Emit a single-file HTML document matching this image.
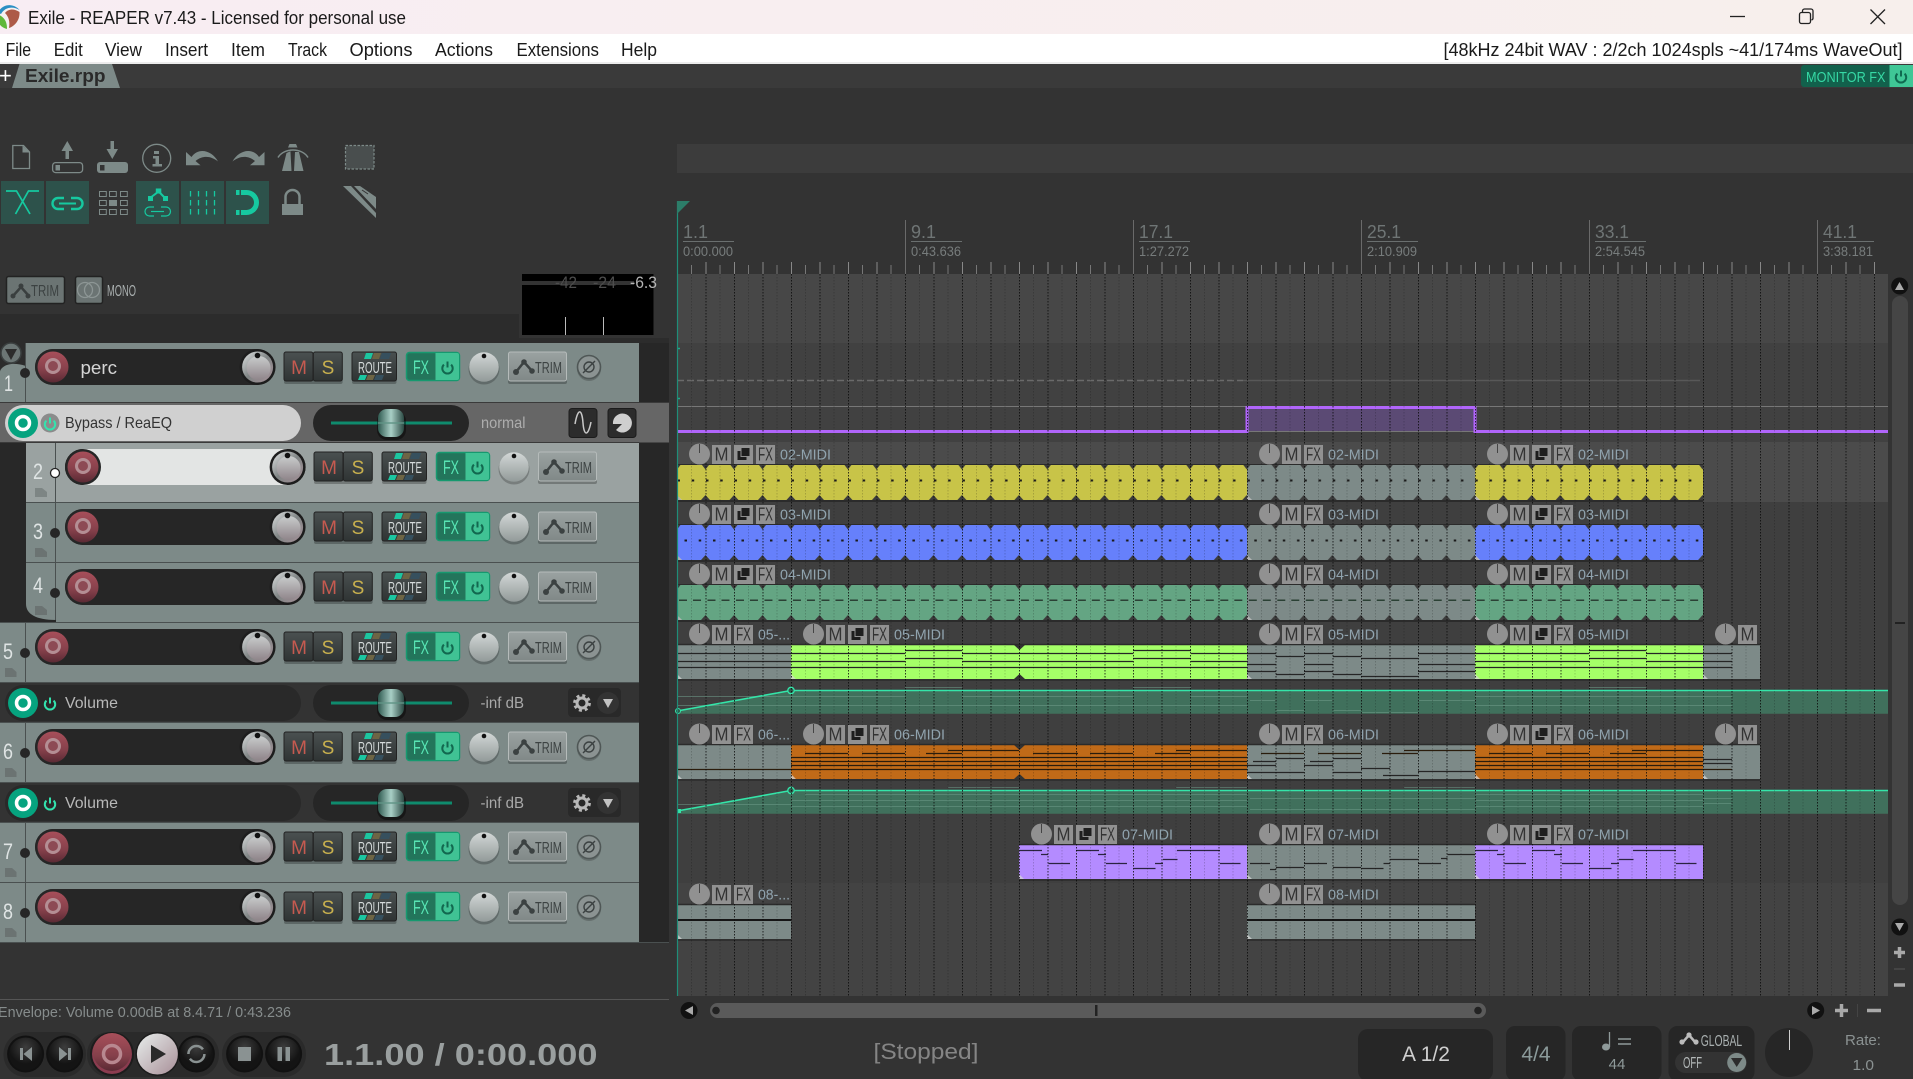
<!DOCTYPE html>
<html lang="en"><head><meta charset="utf-8"><title>Exile - REAPER v7.43</title>
<style>
html,body{margin:0;padding:0;background:#333;width:1913px;height:1079px;overflow:hidden}
svg{display:block;font-family:"Liberation Sans",sans-serif}
text{white-space:pre}
.c{text-anchor:middle}
.t18{font-size:18px;fill:#1a1a1a}
.tm{font-size:19px;fill:#c65a50;text-anchor:middle}
.ts{font-size:19px;fill:#c8b04e;text-anchor:middle}
.tr{font-size:16px;fill:#d5dada}
.fx{font-size:19px;fill:#58e6b5}
.tt{font-size:16px;fill:#3c4242}
.num{font-size:22px;fill:#dfe4e4}
.env{font-size:16px}
.b{font-size:18px;fill:#333;text-anchor:middle}
.n{font-size:15px;fill:#90a3ae}
.rl{font-size:18px;fill:#6f7575}
.rs{font-size:14px;fill:#777c7c}
</style></head><body>
<svg xmlns="http://www.w3.org/2000/svg" width="1913" height="1079" viewBox="0 0 1913 1079">
<defs>
<linearGradient id="tb" x1="0" x2="1"><stop offset="0" stop-color="#f8edf3"/><stop offset="1" stop-color="#f7efec"/></linearGradient>
<linearGradient id="kn" x1="0" y1="0" x2="1" y2="1"><stop offset="0" stop-color="#e2e5e5"/><stop offset=".5" stop-color="#7f8484"/><stop offset="1" stop-color="#a8929a"/></linearGradient>
<linearGradient id="kc" x1="0" y1="0" x2="0" y2="1"><stop offset="0" stop-color="#c9cccc"/><stop offset="1" stop-color="#8f858a"/></linearGradient>
<linearGradient id="pk" x1="0" y1="0" x2="0" y2="1"><stop offset="0" stop-color="#d3d8d7"/><stop offset="1" stop-color="#929a99"/></linearGradient>
<linearGradient id="rc" x1="0" y1="0" x2="0" y2="1"><stop offset="0" stop-color="#a84f5a"/><stop offset=".6" stop-color="#85404b"/><stop offset="1" stop-color="#5a2a34"/></linearGradient>
<linearGradient id="bt" x1="0" y1="0" x2="0" y2="1"><stop offset="0" stop-color="#4a5151"/><stop offset="1" stop-color="#2f3434"/></linearGradient>
<linearGradient id="tr" x1="0" y1="0" x2="0" y2="1"><stop offset="0" stop-color="#9aa2a1"/><stop offset="1" stop-color="#808887"/></linearGradient>
<linearGradient id="th" x1="0" x2="1"><stop offset="0" stop-color="#2f5a50"/><stop offset=".5" stop-color="#a9cfc6"/><stop offset="1" stop-color="#2c4a44"/></linearGradient>
<radialGradient id="tp" cy=".3"><stop offset="0" stop-color="#3d3d3d"/><stop offset="1" stop-color="#141414"/></radialGradient>
<linearGradient id="pl" x1="0" y1="0" x2="1" y2="1"><stop offset="0" stop-color="#e8eeec"/><stop offset="1" stop-color="#a88f98"/></linearGradient>

<path id="pw" d="M-3.600-3.400A5.200 5.200 0 1 0 3.600-3.400M0-6.500V-.5" fill="none" stroke-width="2"/>

<g id="rec1">
 <circle cx="53" cy="0" r="18" fill="#262626"/>
 <circle cx="53" cy="0" r="15.500" fill="url(#rc)"/>
 <circle cx="53" cy="-1" r="6.500" fill="#8d4a54" stroke="#b48e94" stroke-width="3"/>
</g>
<g id="kn1">
 <circle cx="257.600" cy="0" r="18" fill="#1d1d1d"/>
 <circle cx="257.600" cy="0" r="15.500" fill="url(#kn)"/>
 <circle cx="258.600" cy="1" r="12" fill="url(#kc)"/>
 <circle cx="257.500" cy="-11.500" r="2.800" fill="#111"/>
</g>
<g id="tcp">
 <rect x="35" y="-18" width="240" height="36" rx="18" fill="#262626"/>
 <use href="#rec1"/>
 <use href="#kn1"/>
 <rect x="284" y="-13" width="58.600" height="30" rx="2" fill="#000" opacity=".25"/>
 <rect x="284" y="-15" width="29" height="29" rx="2" fill="url(#bt)" stroke="#222"/>
 <rect x="313.300" y="-15" width="29" height="29" rx="2" fill="url(#bt)" stroke="#222"/>
 <rect x="352" y="-13" width="44.500" height="30" rx="2" fill="#000" opacity=".25"/>
 <rect x="352" y="-15" width="44.500" height="29" rx="2" fill="url(#bt)" stroke="#222"/>
 <path d="M366-14H373L371-8H364Z" fill="#1cc6a0"/><path d="M374-14H381L379-8H372Z" fill="#6d6545"/><path d="M382-14H391L389-8H380Z" fill="#36505e"/>
 <path d="M360 8H367L365 13H358Z" fill="#1cc6a0"/><path d="M368 8H375L373 13H366Z" fill="#6d6545"/><path d="M376 8H384L382 13H374Z" fill="#36505e"/>
 <rect x="406.500" y="-14.500" width="53" height="28" rx="3" fill="#23755b" stroke="#16996f" stroke-width="1.500"/>
 <path d="M435.500-14H457a2 2 0 0 1 2 2V11a2 2 0 0 1-2 2H435.500Z" fill="#40c294"/>
 <use href="#pw" x="447.500" y="1" stroke="#12684f"/>
 <circle cx="484" cy="2" r="15.500" fill="#000" opacity=".22"/>
 <circle cx="484" cy="0" r="14.800" fill="url(#pk)"/>
 <circle cx="484" cy="-11" r="2.300" fill="#111"/>
 <rect x="508" y="-13" width="59" height="30" rx="2" fill="#000" opacity=".25"/>
 <rect x="508.500" y="-15" width="58" height="29" rx="2" fill="url(#tr)" stroke="#b5bbba"/>
 <path d="M516 5L524-5L532 4" fill="none" stroke="#3c4242" stroke-width="2.500"/>
 <circle cx="516" cy="5" r="3" fill="#3c4242"/><circle cx="524" cy="-5" r="2.800" fill="#3c4242"/><circle cx="532" cy="4" r="2.800" fill="#3c4242"/>
</g>
<g id="ph">
 <circle cx="589" cy="2" r="12" fill="#000" opacity=".2"/>
 <circle cx="589" cy="0" r="11.500" fill="#8b9392" stroke="#4f5756" stroke-width="1.600"/>
 <circle cx="589" cy="0" r="5" fill="none" stroke="#3c4242" stroke-width="1.400"/>
 <path d="M583 6L595-6" stroke="#3c4242" stroke-width="1.400"/>
</g>
<g id="fad">
 <rect x="313" y="-18" width="156" height="36" rx="18" fill="#262626"/>
 <rect x="331" y="-1.500" width="121" height="3" fill="#0f8b6d"/>
 <rect x="377" y="-12" width="29" height="29" rx="10" fill="#000" opacity=".4"/>
 <rect x="378" y="-14" width="26" height="28" rx="9" fill="url(#th)"/>
 <rect x="378" y="-1" width="26" height="2" fill="#5f9486" opacity=".7"/>
</g>
<g id="eb">
 <circle cx="23" cy="0" r="15" fill="#06a37f"/>
 <circle cx="23" cy="0" r="6.500" fill="none" stroke="#fff" stroke-width="3.500"/>
</g>
<g id="rb">
 <circle cx="0" cy="0" r="18.500" fill="#111"/>
 <circle cx="0" cy="0" r="16.500" fill="url(#tp)"/>
</g>
<g id="bxk"><circle cx="22.500" cy="0" r="10.500" fill="#919191"/><path d="M22.500-10V-1" stroke="#444" stroke-width="1"/><rect x="35" y="-9" width="19" height="19" fill="#919191"/></g>
<g id="dup"><rect x="0" y="-9" width="19" height="19" fill="#919191"/><rect x="3.500" y="-3" width="9" height="9" fill="#1e1e1e"/><rect x="7" y="-6.500" width="9" height="9" fill="#1e1e1e" stroke="#919191" stroke-width="1"/></g>
<g id="l3"><use href="#bxk"/><use href="#dup" x="57"/><rect x="79" y="-9" width="19" height="19" fill="#919191"/></g>
<g id="l2"><use href="#bxk"/><rect x="57" y="-9" width="19" height="19" fill="#919191"/></g>

<pattern id="n1" x="677" y="465" width="28.490" height="60" patternUnits="userSpaceOnUse">
 <path d="M-3.500 0H3.500L0 4.500ZM25 0H32L28.490 4.500ZM-4.500 35H4.500L0 30ZM24 35H33L28.490 30Z" fill="#3c3c3c"/>
 <rect x="0.500" y="14.500" width="2.500" height="2" fill="#1a1a1a"/><rect x="14.700" y="14.500" width="2.500" height="2" fill="#1a1a1a"/>
</pattern>
<pattern id="n3" x="677" y="465" width="28.490" height="60" patternUnits="userSpaceOnUse">
 <path d="M-3.500 0H3.500L0 4.500ZM25 0H32L28.490 4.500ZM-4.500 35H4.500L0 30ZM24 35H33L28.490 30Z" fill="#3c3c3c"/>
 <rect x="7.500" y="14.500" width="2.500" height="2" fill="#1a1a1a"/><rect x="21.700" y="14.500" width="2.500" height="2" fill="#1a1a1a"/>
</pattern>
<pattern id="n2" x="677" y="585" width="28.490" height="60" patternUnits="userSpaceOnUse">
 <path d="M-3.500 0H3.500L0 4.500ZM25 0H32L28.490 4.500ZM-4.500 35H4.500L0 30ZM24 35H33L28.490 30Z" fill="#3c3c3c"/>
 <rect x="2" y="14.500" width="8" height="1.500" fill="#2a4034"/><rect x="16" y="14.500" width="8" height="1.500" fill="#2a4034"/>
</pattern>
<path id="g28" d="M706 274V996M734.500 274V996M763 274V996M791.500 274V996M820 274V996M848.500 274V996M877 274V996M905.500 274V996M934 274V996M962.500 274V996M991 274V996M1019.500 274V996M1048 274V996M1076.500 274V996M1105 274V996M1133.500 274V996M1162 274V996M1190.500 274V996M1219 274V996M1247.500 274V996M1276 274V996M1304.500 274V996M1333 274V996M1361.500 274V996M1390 274V996M1418.500 274V996M1447 274V996M1475.500 274V996M1504 274V996M1532.500 274V996M1561 274V996M1589.500 274V996M1618 274V996M1646.500 274V996M1675 274V996M1703.500 274V996M1732 274V996M1760.500 274V996M1789 274V996M1817.500 274V996M1846 274V996M1874.500 274V996"/>
<path id="g14" d="M691.500 274V996M720 274V996M748.500 274V996M777 274V996M805.500 274V996M834 274V996M862.500 274V996M891 274V996M919.500 274V996M948 274V996M976.500 274V996M1005 274V996M1033.500 274V996M1062 274V996M1090.500 274V996M1119 274V996M1147.500 274V996M1176 274V996M1204.500 274V996M1233 274V996M1261.500 274V996M1290 274V996M1318.500 274V996M1347 274V996M1375.500 274V996M1404 274V996M1432.500 274V996M1461 274V996M1489.500 274V996M1518 274V996M1546.500 274V996M1575 274V996M1603.500 274V996M1632 274V996M1660.500 274V996M1689 274V996M1717.500 274V996M1746 274V996M1774.500 274V996M1803 274V996M1831.500 274V996M1860 274V996"/>
<clipPath id="cr"><rect x="677" y="262" width="1236" height="12"/></clipPath>
<clipPath id="cs"><rect x="677" y="265" width="1236" height="9"/></clipPath>
</defs>

<!-- base -->
<rect width="1913" height="1079" fill="#333"/>
<rect width="1913" height="34" fill="url(#tb)"/>
<rect y="34" width="1913" height="28" fill="#fff"/>
<rect y="62" width="1913" height="2" fill="#ececec"/>
<rect y="64" width="1913" height="24" fill="#3a3a3a"/>

<!-- title -->
<circle cx="8" cy="16.500" r="11.500" fill="#f4f0f0"/>
<path d="M-2 13C2 3 14 3 19.500 10C13 6 5 7 1 14Z" fill="#2a8fc4"/>
<path d="M5 13C9 8 15 9 19.500 12C20 20 15 26 9 28C10 22 9 17 5 13Z" fill="#ad5a48"/>
<path d="M-3 14C-4 22 1 28 7 29C7 22 5 17 -3 14Z" fill="#5fb83a"/>
<text x="28" y="24" class="t18" textLength="378" lengthAdjust="spacingAndGlyphs">Exile - REAPER v7.43 - Licensed for personal use</text>
<path d="M1730 16.500H1745" stroke="#222" stroke-width="1.300"/>
<rect x="1799.500" y="12.500" width="11" height="11" rx="2" fill="none" stroke="#222" stroke-width="1.300"/>
<path d="M1802.500 12V11a2 2 0 0 1 2-2H1811a2 2 0 0 1 2 2V18a2 2 0 0 1-1.500 2" fill="none" stroke="#222" stroke-width="1.300"/>
<path d="M1870.500 9.500L1885 24M1885 9.500L1870.500 24" stroke="#222" stroke-width="1.300"/>

<!-- menu -->
<g class="t18">
<text x="5.600" y="56" class="t18" textLength="25.500" lengthAdjust="spacingAndGlyphs">File</text>
<text x="53.800" y="56" class="t18" textLength="29" lengthAdjust="spacingAndGlyphs">Edit</text>
<text x="105" y="56" class="t18" textLength="37" lengthAdjust="spacingAndGlyphs">View</text>
<text x="165" y="56" class="t18" textLength="43" lengthAdjust="spacingAndGlyphs">Insert</text>
<text x="231" y="56" class="t18" textLength="34" lengthAdjust="spacingAndGlyphs">Item</text>
<text x="288" y="56" class="t18" textLength="39" lengthAdjust="spacingAndGlyphs">Track</text>
<text x="349.500" y="56" class="t18" textLength="63" lengthAdjust="spacingAndGlyphs">Options</text>
<text x="435" y="56" class="t18" textLength="58" lengthAdjust="spacingAndGlyphs">Actions</text>
<text x="516.500" y="56" class="t18" textLength="82.500" lengthAdjust="spacingAndGlyphs">Extensions</text>
<text x="621" y="56" class="t18" textLength="36" lengthAdjust="spacingAndGlyphs">Help</text>
<text x="1443.500" y="56" class="t18" textLength="459" lengthAdjust="spacingAndGlyphs">[48kHz 24bit WAV : 2/2ch 1024spls ~41/174ms WaveOut]</text>
</g>

<!-- tab -->
<text x="-1" y="83" font-size="22" fill="#fff">+</text>
<path d="M12 88L19.500 64H112L120 88Z" fill="#7d8a88"/>
<text x="25" y="82" font-size="18" font-weight="bold" fill="#2a2a2a" textLength="80.500" lengthAdjust="spacingAndGlyphs">Exile.rpp</text>
<rect x="1801" y="65" width="112" height="22" rx="3" fill="#12614c"/>
<path d="M1889.500 65H1913V87H1889.500Z" fill="#3fc796"/>
<text x="1806" y="82" font-size="15" fill="#36d9a5" textLength="79.500" lengthAdjust="spacingAndGlyphs">MONITOR FX</text>
<use href="#pw" x="1901" y="77" stroke="#0f6a50"/>
<rect x="677" y="144" width="1236" height="29" fill="#3c3c3c"/>

<!-- toolbar -->
<g fill="#7d8a88">
<path d="M12.800 145.500H23.500L29.500 152V168.500H12.800Z" fill="none" stroke="#7d8a88" stroke-width="1.300"/>
<path d="M22.500 145.500L29.500 152.500H22.500Z"/>
<path d="M67.300 141L73 151H69V159H65.500V151H61.500Z"/>
<rect x="52.600" y="162.600" width="30" height="10" rx="3" fill="none" stroke="#7d8a88" stroke-width="1.300"/><rect x="55.500" y="165" width="4.500" height="5.500"/>
<path d="M112.300 159L118 149H114V141H110.500V149H106.500Z"/>
<rect x="97" y="162" width="31" height="11" rx="3"/><rect x="100" y="165" width="4.500" height="5.500" fill="#333"/>
<circle cx="156.700" cy="158.300" r="14" fill="none" stroke="#7d8a88" stroke-width="1.300"/>
<path d="M154 151h5v3h-5zM153 156h6v8h3v2.500h-9.500V164h3v-5.500h-2.500z"/>
<path d="M186 152V165.200H200.500L195.500 161C203 155 211 156 218 161.500C212 150 198 147 191.500 157Z"/>
<path d="M264.500 152V165.200H250L255 161C247.500 155 239.500 156 232.500 161.500C238.500 150 252.500 147 259 157Z"/>
<path d="M289.500 144H296L297.500 147.500H288Z"/>
<path d="M286.500 153L290.500 151.300V152.200L291.500 171H282ZM299 152L303.500 171H294L295 152Z"/>
<path d="M278 157.500C284 147.500 302 147.500 308 157.500" fill="none" stroke="#7d8a88" stroke-width="1.500"/>
<rect x="345.500" y="145.500" width="28.500" height="23.500" fill="#494e4e" stroke="#7d8a88" stroke-dasharray="2.500 1.500" stroke-width="1.200"/>
<rect x="99.500" y="191.500" width="6.800" height="5" fill="none" stroke="#7d8a88"/><rect x="109.500" y="191.500" width="6.800" height="5" fill="none" stroke="#7d8a88"/><rect x="120.500" y="191.500" width="6.800" height="5" fill="none" stroke="#7d8a88"/>
<rect x="99.500" y="200.500" width="6.800" height="5" fill="none" stroke="#7d8a88"/><rect x="109" y="200" width="8" height="6"/><rect x="120.500" y="200.500" width="6.800" height="5" fill="none" stroke="#7d8a88"/>
<rect x="99.500" y="209.500" width="6.800" height="5" fill="none" stroke="#7d8a88"/><rect x="109.500" y="209.500" width="6.800" height="5" fill="none" stroke="#7d8a88"/><rect x="120.500" y="209.500" width="6.800" height="5" fill="none" stroke="#7d8a88"/>
<rect x="282" y="204" width="21" height="11"/>
<path d="M285.500 204.500V197a7 7 0 0 1 14 0V204.500" fill="none" stroke="#7d8a88" stroke-width="2.500"/>
<path d="M343 186H351L376 213V218ZM354 186H360L376 197V209Z"/>
<path d="M362 190L368 194M365 186L372 191" stroke="#333" stroke-width="1"/>
</g>
<g fill="#2d524b">
<rect x="1" y="181" width="43" height="43"/><rect x="46" y="181" width="43" height="43"/><rect x="136" y="181" width="43" height="43"/><rect x="181" y="181" width="43" height="43"/><rect x="226" y="181" width="43" height="43"/>
</g>
<g fill="none" stroke="#16c9a0" stroke-width="1.700">
<path d="M6 191H16.500L30 214M39 191H28.500L15.500 214"/>
<path d="M64 198H58A5.500 5.500 0 0 0 58 209H64M71 198H77A5.500 5.500 0 0 1 77 209H71" stroke-width="2.400"/>
<path d="M59 203.500H76" stroke-width="2"/>
<path d="M154 207H149.500A4.500 4.500 0 0 0 149.500 216H154M161 207H166A4.500 4.500 0 0 1 166 216H161" stroke-width="1.200"/>
<path d="M151 211.500H164" stroke-width="1.200"/>
<path d="M150 198L158.700 191.500L165 198" stroke-width="2"/>
<path d="M190.500 191V215M198.500 191V215M206.500 191V215M214.500 191V215" stroke-width="1.300" stroke-dasharray="5.500 3.500"/>
<path d="M241 192.500H246.500A10 10 0 0 1 246.500 212.500H241" stroke-width="5"/>
</g>
<g fill="#16c9a0">
<rect x="155.800" y="188.500" width="5.500" height="5"/><rect x="148" y="196" width="5" height="5"/><rect x="163" y="196" width="5" height="5"/>
<rect x="236" y="190" width="3.500" height="5"/><rect x="236" y="210" width="3.500" height="5"/>
</g>

<!-- master row -->
<rect x="0" y="314" width="519" height="24" fill="#2c2c2c"/>
<rect x="0" y="338" width="669" height="5" fill="#2c2c2c"/>
<rect x="6.500" y="276.500" width="58" height="27" rx="2" fill="#6b7473" stroke="#222" stroke-width="1.500"/>
<path d="M13 296L21 287L28 295" fill="none" stroke="#3a3f3f" stroke-width="2.500"/><circle cx="13" cy="296" r="2.500" fill="#3a3f3f"/><circle cx="21" cy="286" r="2.500" fill="#3a3f3f"/><circle cx="28" cy="296" r="2.500" fill="#3a3f3f"/>
<text x="31" y="296" font-size="16" fill="#3c4242" textLength="28" lengthAdjust="spacingAndGlyphs">TRIM</text>
<rect x="75.500" y="276.500" width="27" height="27" rx="2" fill="#6b7473" stroke="#222" stroke-width="1.500"/>
<circle cx="85" cy="290" r="7.500" fill="none" stroke="#8d9695" stroke-width="1.300"/><circle cx="92" cy="290" r="7.500" fill="none" stroke="#8d9695" stroke-width="1.300"/>
<text x="107" y="296" font-size="16" fill="#aab0b0" textLength="29" lengthAdjust="spacingAndGlyphs">MONO</text>
<rect x="522" y="274" width="131.500" height="61" fill="#000"/>
<rect x="522" y="281" width="112" height="4" fill="#333"/>
<path d="M565.500 317V335M603.500 317V335" stroke="#bbb" stroke-width="1"/>
<text x="555" y="288" font-size="17" fill="#4d4d4d" textLength="22" lengthAdjust="spacingAndGlyphs">-42</text>
<text x="593" y="288" font-size="17" fill="#4d4d4d" textLength="23" lengthAdjust="spacingAndGlyphs">-24</text>
<text x="630" y="288" font-size="17" fill="#b5b5b5" textLength="27" lengthAdjust="spacingAndGlyphs">-6.3</text>

<!-- track panels -->
<rect x="639" y="343" width="30" height="599" fill="#272727"/>
<rect x="0" y="442" width="26" height="180" fill="#282828"/>
<rect x="0" y="343" width="639" height="59" fill="#7d8a88"/>
<rect x="26" y="442" width="613" height="60" fill="#9aa2a1"/>
<rect x="26" y="502" width="613" height="60" fill="#7d8a88"/>
<rect x="26" y="562" width="613" height="60" fill="#7d8a88"/>
<rect x="0" y="622" width="639" height="60" fill="#7d8a88"/>
<rect x="0" y="722" width="639" height="60" fill="#7d8a88"/>
<rect x="0" y="822" width="639" height="60" fill="#7d8a88"/>
<rect x="0" y="882" width="639" height="60" fill="#7d8a88"/>
<path d="M0 343H26V366C8 360 0 368 0 372Z" fill="#2c2c2c"/>
<rect x="0" y="402" width="669" height="40.500" fill="#666"/>
<path d="M0 402.500H669M0 442.500H639" stroke="#3a3a3a" stroke-width="1"/>
<rect x="0" y="682" width="639" height="40" fill="#333"/>
<rect x="0" y="782" width="639" height="40" fill="#333"/>
<path d="M26 502.500H639M26 562.500H639M0 622.500H639M0 682.500H639M0 722.500H639M0 782.500H639M0 822.500H639M0 882.500H639M0 942.500H669" stroke="#4a5050" stroke-width="1"/>
<path d="M25.500 343V402M55.500 443V622M25.500 622V682M25.500 722V782M25.500 822V942" stroke="#4a5050" stroke-width="1"/>
<circle cx="11" cy="353" r="10" fill="#6c7675" stroke="#3a3f3f" stroke-width="1.500"/><path d="M5 349H17L11 360Z" fill="#2c2c2c"/>

<!-- Track 1 -->
<g transform="translate(0,367)"><use href="#tcp"/><use href="#ph"/>
<text x="80.500" y="7" font-size="18" fill="#d5d5d5" textLength="36.500" lengthAdjust="spacingAndGlyphs">perc</text>
<text x="299" y="7" class="tm">M</text><text x="328" y="7" class="ts">S</text>
<text x="358" y="6" class="tr" textLength="34" lengthAdjust="spacingAndGlyphs">ROUTE</text>
<text x="413" y="7" class="fx" textLength="16" lengthAdjust="spacingAndGlyphs">FX</text>
<text x="535" y="6" class="tt" textLength="27" lengthAdjust="spacingAndGlyphs">TRIM</text></g>
<text x="4" y="391" class="num" textLength="9" lengthAdjust="spacingAndGlyphs">1</text>
<circle cx="25" cy="373" r="5" fill="#262626"/>

<!-- Bypass lane -->
<g transform="translate(0,423)">
<rect x="5" y="-18" width="296" height="36" rx="18" fill="#d0d0d0"/>
<use href="#eb"/>
<circle cx="50" cy="0" r="9.500" fill="#8b8b8b"/><use href="#pw" x="50" y="1" stroke="#33e3ae"/>
<text x="65" y="5" class="env" fill="#333" textLength="107" lengthAdjust="spacingAndGlyphs">Bypass / ReaEQ</text>
<use href="#fad"/>
<text x="481" y="5" class="env" fill="#adadad" textLength="44.500" lengthAdjust="spacingAndGlyphs">normal</text>
<rect x="569" y="-14.500" width="28" height="29" rx="3" fill="#2c2c2c" stroke="#1c1c1c"/>
<path d="M575 1C578-16 582-14 583 0C584 13 588 14 591 -1" fill="none" stroke="#c8c8c8" stroke-width="1.500"/>
<rect x="608" y="-14.500" width="28" height="29" rx="3" fill="#2c2c2c" stroke="#1c1c1c"/>
<path d="M622-9.500A9.500 9.500 0 1 1 616 7L622 1L613 1A9.500 9.500 0 0 1 622-9.500Z" fill="#cfcfcf"/>
</g>

<!-- Track 2 -->
<g transform="translate(30,467)"><use href="#tcp"/>
<rect x="53" y="-18" width="204" height="36" fill="#e3e5e4"/>
<use href="#rec1"/><use href="#kn1"/>
<text x="299" y="7" class="tm">M</text><text x="328" y="7" class="ts">S</text>
<text x="358" y="6" class="tr" textLength="34" lengthAdjust="spacingAndGlyphs">ROUTE</text>
<text x="413" y="7" class="fx" textLength="16" lengthAdjust="spacingAndGlyphs">FX</text>
<text x="535" y="6" class="tt" textLength="27" lengthAdjust="spacingAndGlyphs">TRIM</text></g>
<text x="33" y="479" class="num" textLength="10" lengthAdjust="spacingAndGlyphs">2</text>
<circle cx="55" cy="473" r="4.500" fill="#fff" stroke="#222" stroke-width="1.300"/>
<path d="M35 488H42L47 492V497H35Z" fill="#7d8584"/>
<!-- Track 3 -->
<g transform="translate(30,527)"><use href="#tcp"/>
<text x="299" y="7" class="tm">M</text><text x="328" y="7" class="ts">S</text>
<text x="358" y="6" class="tr" textLength="34" lengthAdjust="spacingAndGlyphs">ROUTE</text>
<text x="413" y="7" class="fx" textLength="16" lengthAdjust="spacingAndGlyphs">FX</text>
<text x="535" y="6" class="tt" textLength="27" lengthAdjust="spacingAndGlyphs">TRIM</text></g>
<text x="33" y="539" class="num" textLength="10" lengthAdjust="spacingAndGlyphs">3</text>
<circle cx="55" cy="533" r="5" fill="#262626"/>
<path d="M35 548H42L47 552V557H35Z" fill="#6b7372"/>
<!-- Track 4 -->
<g transform="translate(30,587)"><use href="#tcp"/>
<text x="299" y="7" class="tm">M</text><text x="328" y="7" class="ts">S</text>
<text x="358" y="6" class="tr" textLength="34" lengthAdjust="spacingAndGlyphs">ROUTE</text>
<text x="413" y="7" class="fx" textLength="16" lengthAdjust="spacingAndGlyphs">FX</text>
<text x="535" y="6" class="tt" textLength="27" lengthAdjust="spacingAndGlyphs">TRIM</text></g>
<text x="33" y="593" class="num" textLength="10" lengthAdjust="spacingAndGlyphs">4</text>
<circle cx="55" cy="593" r="5" fill="#262626"/>
<path d="M35 606H42L47 610V615H35Z" fill="#6b7372"/>
<path d="M26 604C26 614 36 620 56 620V622H26Z" fill="#282828"/>
<!-- Track 5 -->
<g transform="translate(0,647)"><use href="#tcp"/><use href="#ph"/>
<text x="299" y="7" class="tm">M</text><text x="328" y="7" class="ts">S</text>
<text x="358" y="6" class="tr" textLength="34" lengthAdjust="spacingAndGlyphs">ROUTE</text>
<text x="413" y="7" class="fx" textLength="16" lengthAdjust="spacingAndGlyphs">FX</text>
<text x="535" y="6" class="tt" textLength="27" lengthAdjust="spacingAndGlyphs">TRIM</text></g>
<text x="3" y="659" class="num" textLength="10" lengthAdjust="spacingAndGlyphs">5</text>
<circle cx="25" cy="653" r="5" fill="#262626"/>
<path d="M5 668H12L16.500 672V677H5Z" fill="#6b7372"/>
<!-- Volume lane 1 -->
<g transform="translate(0,703)">
<rect x="5" y="-18" width="296" height="36" rx="18" fill="#292929"/><use href="#eb"/>
<use href="#pw" x="50" y="1" stroke="#33e3ae"/>
<text x="65" y="5" class="env" fill="#b8b8b8" textLength="53" lengthAdjust="spacingAndGlyphs">Volume</text>
<use href="#fad"/>
<text x="480.500" y="5" class="env" fill="#a9a9a9" textLength="43.500" lengthAdjust="spacingAndGlyphs">-inf dB</text>
<rect x="568" y="-15" width="53" height="29" rx="4" fill="#292929"/>
<circle cx="582" cy="0" r="5" fill="none" stroke="#b8b8b8" stroke-width="3"/><circle cx="582" cy="0" r="7.500" fill="none" stroke="#b8b8b8" stroke-width="2.800" stroke-dasharray="3 2.900"/>
<circle cx="608" cy="0" r="11" fill="#333"/><path d="M603-4H613L608 5Z" fill="#c2c2c2"/>
</g>
<!-- Track 6 -->
<g transform="translate(0,747)"><use href="#tcp"/><use href="#ph"/>
<text x="299" y="7" class="tm">M</text><text x="328" y="7" class="ts">S</text>
<text x="358" y="6" class="tr" textLength="34" lengthAdjust="spacingAndGlyphs">ROUTE</text>
<text x="413" y="7" class="fx" textLength="16" lengthAdjust="spacingAndGlyphs">FX</text>
<text x="535" y="6" class="tt" textLength="27" lengthAdjust="spacingAndGlyphs">TRIM</text></g>
<text x="3" y="759" class="num" textLength="10" lengthAdjust="spacingAndGlyphs">6</text>
<circle cx="25" cy="753" r="5" fill="#262626"/>
<path d="M5 768H12L16.500 772V777H5Z" fill="#6b7372"/>
<!-- Volume lane 2 -->
<g transform="translate(0,803)">
<rect x="5" y="-18" width="296" height="36" rx="18" fill="#292929"/><use href="#eb"/>
<use href="#pw" x="50" y="1" stroke="#33e3ae"/>
<text x="65" y="5" class="env" fill="#b8b8b8" textLength="53" lengthAdjust="spacingAndGlyphs">Volume</text>
<use href="#fad"/>
<text x="480.500" y="5" class="env" fill="#a9a9a9" textLength="43.500" lengthAdjust="spacingAndGlyphs">-inf dB</text>
<rect x="568" y="-15" width="53" height="29" rx="4" fill="#292929"/>
<circle cx="582" cy="0" r="5" fill="none" stroke="#b8b8b8" stroke-width="3"/><circle cx="582" cy="0" r="7.500" fill="none" stroke="#b8b8b8" stroke-width="2.800" stroke-dasharray="3 2.900"/>
<circle cx="608" cy="0" r="11" fill="#333"/><path d="M603-4H613L608 5Z" fill="#c2c2c2"/>
</g>
<!-- Track 7 -->
<g transform="translate(0,847)"><use href="#tcp"/><use href="#ph"/>
<text x="299" y="7" class="tm">M</text><text x="328" y="7" class="ts">S</text>
<text x="358" y="6" class="tr" textLength="34" lengthAdjust="spacingAndGlyphs">ROUTE</text>
<text x="413" y="7" class="fx" textLength="16" lengthAdjust="spacingAndGlyphs">FX</text>
<text x="535" y="6" class="tt" textLength="27" lengthAdjust="spacingAndGlyphs">TRIM</text></g>
<text x="3" y="859" class="num" textLength="10" lengthAdjust="spacingAndGlyphs">7</text>
<circle cx="25" cy="853" r="5" fill="#262626"/>
<path d="M5 868H12L16.500 872V877H5Z" fill="#6b7372"/>
<!-- Track 8 -->
<g transform="translate(0,907)"><use href="#tcp"/><use href="#ph"/>
<text x="299" y="7" class="tm">M</text><text x="328" y="7" class="ts">S</text>
<text x="358" y="6" class="tr" textLength="34" lengthAdjust="spacingAndGlyphs">ROUTE</text>
<text x="413" y="7" class="fx" textLength="16" lengthAdjust="spacingAndGlyphs">FX</text>
<text x="535" y="6" class="tt" textLength="27" lengthAdjust="spacingAndGlyphs">TRIM</text></g>
<text x="3" y="919" class="num" textLength="10" lengthAdjust="spacingAndGlyphs">8</text>
<circle cx="25" cy="913" r="5" fill="#262626"/>
<path d="M5 928H12L16.500 932V937H5Z" fill="#6b7372"/>

<!-- status -->
<path d="M0 999.500H669" stroke="#555"/>
<text x="-2" y="1017" font-size="15" fill="#868c8c" textLength="293" lengthAdjust="spacingAndGlyphs">Envelope: Volume 0.00dB at 8.4.71 / 0:43.236</text>

<!-- transport -->
<rect x="3.500" y="1032" width="82.500" height="45" rx="22" fill="#2a2a2a"/>
<rect x="87" y="1032" width="132" height="45" rx="22" fill="#2a2a2a"/>
<rect x="222" y="1032" width="84" height="45" rx="22" fill="#2a2a2a"/>
<use href="#rb" x="25.600" y="1054"/><path d="M20 1048H23V1060H20ZM32 1047V1061L23.500 1054Z" fill="#8a9292"/>
<use href="#rb" x="64.600" y="1054"/><path d="M71 1048H68V1060H71ZM59 1047V1061L67.500 1054Z" fill="#8a9292"/>
<circle cx="112" cy="1054" r="22" fill="#1c1c1c"/><circle cx="112" cy="1054" r="20" fill="#8c3c50"/><circle cx="112" cy="1052" r="19" fill="url(#rc)"/><circle cx="112" cy="1054" r="8.500" fill="none" stroke="#b88890" stroke-width="3.500"/>
<circle cx="157.400" cy="1054" r="22" fill="#1c1c1c"/><circle cx="157.400" cy="1054" r="20.500" fill="url(#pl)"/><path d="M151 1045L166 1054L151 1063Z" fill="#2a2a2a"/>
<use href="#rb" x="196.400" y="1054"/><circle cx="196.400" cy="1054" r="8" fill="none" stroke="#8a9292" stroke-width="2.500" stroke-dasharray="20 5"/>
<use href="#rb" x="244.600" y="1054"/><rect x="238" y="1047" width="13" height="14" fill="#8a9292"/>
<use href="#rb" x="283.600" y="1054"/><rect x="277.500" y="1047" width="4.500" height="14" fill="#8a9292"/><rect x="285.500" y="1047" width="4.500" height="14" fill="#8a9292"/>
<text x="324" y="1065" font-size="31" font-weight="bold" fill="#9a9f9f" textLength="273.500" lengthAdjust="spacingAndGlyphs">1.1.00 / 0:00.000</text>
<text x="873.500" y="1059" font-size="22" fill="#858585" textLength="105" lengthAdjust="spacingAndGlyphs">[Stopped]</text>

<!-- lanes -->
<rect x="677" y="274" width="1211" height="722" fill="#434343"/>
<rect x="677" y="274" width="1211" height="69" fill="#474747"/>
<rect x="677" y="343" width="1211" height="99" fill="#414141"/>
<rect x="677" y="442" width="1211" height="60" fill="#4b4b4b"/>
<rect x="677" y="502" width="1211" height="381" fill="#3f3f3f"/>

<!-- env lane 0 -->
<path d="M677 380.500H1243" stroke="#6a6a6a" stroke-width="1.500" stroke-dasharray="7 3"/><path d="M1243 380.500H1700" stroke="#585858" stroke-width="1.500"/>
<path d="M677 348.500H680M677 398.500H680" stroke="#1fa88a" stroke-width="1.500"/>
<rect x="1247" y="408" width="228" height="23" fill="#5b4a74"/>
<path d="M677 406.500H1888M1247 431.500H1475" stroke="#777" stroke-width="1"/>
<path d="M677 431.500H1247V407.500H1475V431.500H1888" fill="none" stroke="#b165fb" stroke-width="3"/>

<!-- items yellow -->
<rect x="677" y="465" width="570" height="35" fill="#c8c448"/><rect x="1247" y="465" width="228" height="35" fill="#7d8a88"/><rect x="1475" y="465" width="228" height="35" fill="#c8c448"/>
<rect x="677" y="525" width="570" height="35" fill="#6680fb"/><rect x="1247" y="525" width="228" height="35" fill="#7d8a88"/><rect x="1475" y="525" width="228" height="35" fill="#6680fb"/>
<rect x="677" y="585" width="570" height="35" fill="#64a583"/><rect x="1247" y="585" width="228" height="35" fill="#7d8a88"/><rect x="1475" y="585" width="228" height="35" fill="#64a583"/>
<rect x="677" y="465" width="1026" height="35" fill="url(#n1)"/><rect x="677" y="525" width="1026" height="35" fill="url(#n3)"/><rect x="677" y="585" width="1026" height="35" fill="url(#n2)"/>
<path d="M677 464.500H1703M677 524.500H1703M677 584.500H1703" stroke="#2b2b2b"/>
<path d="M677 501H1703M677 561H1703M677 621H1703" stroke="#2b2b2b" stroke-width="2"/>

<!-- track 5 -->
<rect x="677" y="645" width="114" height="34" fill="#7d8a88"/><rect x="791" y="645" width="456" height="34" fill="#a5ff68"/><rect x="1247" y="645" width="228" height="34" fill="#7d8a88"/><rect x="1475" y="645" width="228" height="34" fill="#a5ff68"/><rect x="1703" y="645" width="57" height="34" fill="#7d8a88"/>
<path d="M677 653.500H905M962 653.500H1133M1191 653.500H1247M1475 653.500H1589M1646 653.500H1732M905 650.500H962M1133 650.500H1191M1589 650.500H1646M677 667.500H1247M1475 667.500H1732M791 661.500H905M962 661.500H1133M1191 661.500H1247M1475 661.500H1589M1646 661.500H1732M905 658.500H962M1133 658.500H1191M1589 658.500H1646M677 661.500H791" fill="none" stroke="#252525" stroke-width="1.300"/>
<path d="M1247 653.500H1276M1304 653.500H1333M1418 653.500H1475M1247 664.500H1276M1304 664.500H1333M1418 664.500H1475M1247 671.500H1276M1304 671.500H1333M1418 671.500H1475M1276 656.500H1304M1333 656.500H1361M1276 674.500H1304M1333 674.500H1361M1361 658.500H1418M1361 676.500H1418" fill="none" stroke="#252525" stroke-width="1.300"/>
<path d="M1014 645H1025L1019.500 650ZM1014 679H1025L1019.500 674Z" fill="#333"/>
<path d="M677 644.500H1760M677 680H1760" stroke="#2b2b2b" stroke-width="1.500"/>

<!-- env lane 1 -->
<path d="M677 711L791 690.500H1888V713.700H677Z" fill="#40705c"/>
<path d="M905 687.500H962M1133 687.500H1191M1589 687.500H1646M677 696.500H905M962 696.500H1133M1191 696.500H1247M1475 696.500H1732M677 705.500H1247M1475 705.500H1732M1250 700.500H1276M1304 700.500H1333M1418 700.500H1475M1276 710.500H1304M1333 710.500H1361M1361 712.500H1418" stroke="#6f9d8b" stroke-width="1" opacity=".55" fill="none"/>
<path d="M677 711L791 690.500H1888" fill="none" stroke="#34e5a9" stroke-width="1.600"/>
<circle cx="791" cy="690.500" r="3.200" fill="#2f5a4c" stroke="#34e5a9" stroke-width="1.300"/><circle cx="678" cy="711" r="2.500" fill="#2f5a4c" stroke="#34e5a9"/>

<!-- track 6 -->
<rect x="677" y="745" width="114" height="34" fill="#7d8a88"/><rect x="791" y="745" width="456" height="34" fill="#c06a18"/><rect x="1247" y="745" width="228" height="34" fill="#7d8a88"/><rect x="1475" y="745" width="228" height="34" fill="#c06a18"/><rect x="1703" y="745" width="57" height="34" fill="#7d8a88"/>
<path d="M677 769.500H1247M1475 769.500H1732M791 765.500H1247M1475 765.500H1703M791 761.500H1247M1475 761.500H1703M791 757.500H1247M1475 757.500H1703M805 753.500H848M862 753.500H905M926 753.500H962M1033 753.500H1078M1090 753.500H1133M1155 753.500H1190M1261 753.500H1304M1318 753.500H1361M1382 753.500H1418M1489 753.500H1532M1546 753.500H1589M1610 753.500H1646M948 750.500H1019M1176 750.500H1247M1404 750.500H1475M1632 750.500H1703" fill="none" stroke="#2a1c0c" stroke-width="1.300"/>
<path d="M1253 761.500H1276M1310 761.500H1333M1276 758.500H1304M1333 758.500H1361M1247 765.500H1276M1304 765.500H1333M1361 768.500H1390M1418 771.500H1475M1247 772.500H1304M1333 772.500H1361M1383 775.500H1418M1703 759.500H1732M1703 763.500H1732" fill="none" stroke="#252525" stroke-width="1.300"/>
<path d="M1014 745H1025L1019.500 750ZM1014 779H1025L1019.500 774Z" fill="#333"/>
<path d="M677 744.500H1760M677 780H1760" stroke="#2b2b2b" stroke-width="1.500"/>

<!-- env lane 2 -->
<path d="M677 811L791 790.500H1888V813.700H677Z" fill="#40705c"/>
<path d="M948 787.500H1019M1176 787.500H1247M1404 787.500H1475M677 804.500H791M805 794.500H1247M1475 794.500H1703M791 800.500H1247M1475 800.500H1703M791 806.500H1247M1475 806.500H1703M1250 798.500H1475M1250 809.500H1475M1703 798.500H1732M1703 803.500H1732" stroke="#6f9d8b" stroke-width="1" opacity=".5" fill="none"/>
<path d="M677 811L791 790.500H1888" fill="none" stroke="#34e5a9" stroke-width="1.600"/>
<circle cx="791" cy="790.500" r="3.200" fill="#2f5a4c" stroke="#34e5a9" stroke-width="1.300"/><rect x="677" y="809" width="4" height="4" fill="#34e5a9"/>

<!-- track 7 -->
<rect x="1019" y="845" width="228" height="34" fill="#b48bff"/><rect x="1247" y="845" width="228" height="34" fill="#7d8a88"/><rect x="1475" y="845" width="228" height="34" fill="#b48bff"/>
<path d="M1019.500 850.500H1042M1041 854.500H1048M1048.500 863.500H1070M1076 850.500H1099M1098 854.500H1106M1106 863.500H1127M1133.500 868.500H1155.500M1155 863.500H1163M1163 859.500H1177.500M1177 850.500H1220M1220 863.500H1240.500M1475.500 850.500H1498M1497 854.500H1504M1504.500 863.500H1526M1532 850.500H1555M1554 854.500H1562M1562 863.500H1583M1589.500 868.500H1611.500M1611 863.500H1619M1619 859.500H1633.500M1633 850.500H1676M1676 863.500H1696.500" fill="none" stroke="#2b2340" stroke-width="1.300"/>
<path d="M1250 863.500H1270M1270 869.500H1276M1276 867.500H1304M1304 863.500H1327M1333 867.500H1361M1361.500 868.500H1383.500M1383.500 863.500H1390M1390 859.500H1418M1418 863.500H1441M1441 858.500H1447.500M1447.500 854.500H1475" fill="none" stroke="#252525" stroke-width="1.300"/>
<path d="M1019 844.500H1703M1019 880H1703" stroke="#2b2b2b" stroke-width="1.500"/>

<!-- track 8 -->
<rect x="677" y="905" width="114" height="34" fill="#7d8a88"/><rect x="1247" y="905" width="228" height="34" fill="#7d8a88"/>
<path d="M677 920H791M1247 920H1475" stroke="#151515" stroke-width="2"/>
<path d="M677 904.500H791M1247 904.500H1475M677 940H791M1247 940H1475" stroke="#2b2b2b" stroke-width="1.500"/>

<!-- corner markers -->
<path d="M677 500V495L682 500ZM1247 500V495L1252 500ZM1475 500V495L1480 500ZM677 560V555L682 560ZM1247 560V555L1252 560ZM1475 560V555L1480 560ZM677 620V615L682 620ZM1247 620V615L1252 620ZM1475 620V615L1480 620ZM677 679V674L682 679ZM791 679V674L796 679ZM1247 679V674L1252 679ZM1475 679V674L1480 679ZM1703 679V674L1708 679ZM677 779V774L682 779ZM791 779V774L796 779ZM1247 779V774L1252 779ZM1475 779V774L1480 779ZM1703 779V774L1708 779ZM1019 879V874L1024 879ZM1247 879V874L1252 879ZM1475 879V874L1480 879ZM677 939V934L682 939ZM1247 939V934L1252 939Z" fill="#d6d6d6" opacity=".75"/>

<!-- grid -->
<use href="#g14" stroke="#000" stroke-opacity=".18" stroke-width="1" stroke-dasharray="1.500 1.500"/>
<use href="#g28" stroke="#0a0a0a" stroke-opacity=".8" stroke-width="1" stroke-dasharray="1.500 1.500"/>
<path d="M677.500 201V996" stroke="#1f8e79" stroke-width="1.200"/>
<path d="M677 201H690L677 214Z" fill="#2c7d69"/>

<!-- ruler -->
<g clip-path="url(#cs)"><use href="#g14" y="-9" stroke="#777" stroke-width="1"/></g>
<g clip-path="url(#cr)"><use href="#g28" y="-12" stroke="#888" stroke-width="1"/></g>
<path d="M905.500 220V274M1133.500 220V274M1361.500 220V274M1589.500 220V274M1817.500 220V274" stroke="#6a6a6a"/>
<path d="M683 241.500H734M911 241.500H962M1139 241.500H1190M1367 241.500H1418M1595 241.500H1646M1823 241.500H1874" stroke="#6a6f6f"/>
<text x="683" y="238" class="rl" textLength="25" lengthAdjust="spacingAndGlyphs">1.1</text><text x="683" y="256" class="rs" textLength="50" lengthAdjust="spacingAndGlyphs">0:00.000</text>
<text x="911" y="238" class="rl" textLength="25" lengthAdjust="spacingAndGlyphs">9.1</text><text x="911" y="256" class="rs" textLength="50" lengthAdjust="spacingAndGlyphs">0:43.636</text>
<text x="1139" y="238" class="rl" textLength="34" lengthAdjust="spacingAndGlyphs">17.1</text><text x="1139" y="256" class="rs" textLength="50" lengthAdjust="spacingAndGlyphs">1:27.272</text>
<text x="1367" y="238" class="rl" textLength="34" lengthAdjust="spacingAndGlyphs">25.1</text><text x="1367" y="256" class="rs" textLength="50" lengthAdjust="spacingAndGlyphs">2:10.909</text>
<text x="1595" y="238" class="rl" textLength="34" lengthAdjust="spacingAndGlyphs">33.1</text><text x="1595" y="256" class="rs" textLength="50" lengthAdjust="spacingAndGlyphs">2:54.545</text>
<text x="1823" y="238" class="rl" textLength="34" lengthAdjust="spacingAndGlyphs">41.1</text><text x="1823" y="256" class="rs" textLength="50" lengthAdjust="spacingAndGlyphs">3:38.181</text>

<!-- item labels -->
<g transform="translate(677,454)"><use href="#l3"/><text x="44.500" y="6.500" class="b" textLength="14" lengthAdjust="spacingAndGlyphs">M</text><text x="88.500" y="6.500" class="b" textLength="15" lengthAdjust="spacingAndGlyphs">FX</text><text x="103" y="5.300" class="n" textLength="51" lengthAdjust="spacingAndGlyphs">02-MIDI</text></g>
<g transform="translate(1247,454)"><use href="#l2"/><text x="44.500" y="6.500" class="b" textLength="14" lengthAdjust="spacingAndGlyphs">M</text><text x="66.500" y="6.500" class="b" textLength="15" lengthAdjust="spacingAndGlyphs">FX</text><text x="81" y="5.300" class="n" textLength="51" lengthAdjust="spacingAndGlyphs">02-MIDI</text></g>
<g transform="translate(1475,454)"><use href="#l3"/><text x="44.500" y="6.500" class="b" textLength="14" lengthAdjust="spacingAndGlyphs">M</text><text x="88.500" y="6.500" class="b" textLength="15" lengthAdjust="spacingAndGlyphs">FX</text><text x="103" y="5.300" class="n" textLength="51" lengthAdjust="spacingAndGlyphs">02-MIDI</text></g>

<g transform="translate(677,514)"><use href="#l3"/><text x="44.500" y="6.500" class="b" textLength="14" lengthAdjust="spacingAndGlyphs">M</text><text x="88.500" y="6.500" class="b" textLength="15" lengthAdjust="spacingAndGlyphs">FX</text><text x="103" y="5.300" class="n" textLength="51" lengthAdjust="spacingAndGlyphs">03-MIDI</text></g>
<g transform="translate(1247,514)"><use href="#l2"/><text x="44.500" y="6.500" class="b" textLength="14" lengthAdjust="spacingAndGlyphs">M</text><text x="66.500" y="6.500" class="b" textLength="15" lengthAdjust="spacingAndGlyphs">FX</text><text x="81" y="5.300" class="n" textLength="51" lengthAdjust="spacingAndGlyphs">03-MIDI</text></g>
<g transform="translate(1475,514)"><use href="#l3"/><text x="44.500" y="6.500" class="b" textLength="14" lengthAdjust="spacingAndGlyphs">M</text><text x="88.500" y="6.500" class="b" textLength="15" lengthAdjust="spacingAndGlyphs">FX</text><text x="103" y="5.300" class="n" textLength="51" lengthAdjust="spacingAndGlyphs">03-MIDI</text></g>

<g transform="translate(677,574)"><use href="#l3"/><text x="44.500" y="6.500" class="b" textLength="14" lengthAdjust="spacingAndGlyphs">M</text><text x="88.500" y="6.500" class="b" textLength="15" lengthAdjust="spacingAndGlyphs">FX</text><text x="103" y="5.300" class="n" textLength="51" lengthAdjust="spacingAndGlyphs">04-MIDI</text></g>
<g transform="translate(1247,574)"><use href="#l2"/><text x="44.500" y="6.500" class="b" textLength="14" lengthAdjust="spacingAndGlyphs">M</text><text x="66.500" y="6.500" class="b" textLength="15" lengthAdjust="spacingAndGlyphs">FX</text><text x="81" y="5.300" class="n" textLength="51" lengthAdjust="spacingAndGlyphs">04-MIDI</text></g>
<g transform="translate(1475,574)"><use href="#l3"/><text x="44.500" y="6.500" class="b" textLength="14" lengthAdjust="spacingAndGlyphs">M</text><text x="88.500" y="6.500" class="b" textLength="15" lengthAdjust="spacingAndGlyphs">FX</text><text x="103" y="5.300" class="n" textLength="51" lengthAdjust="spacingAndGlyphs">04-MIDI</text></g>

<g transform="translate(677,634)"><use href="#l2"/><text x="44.500" y="6.500" class="b" textLength="14" lengthAdjust="spacingAndGlyphs">M</text><text x="66.500" y="6.500" class="b" textLength="15" lengthAdjust="spacingAndGlyphs">FX</text><text x="81" y="5.300" class="n" textLength="32" lengthAdjust="spacingAndGlyphs">05-...</text></g>
<g transform="translate(791,634)"><use href="#l3"/><text x="44.500" y="6.500" class="b" textLength="14" lengthAdjust="spacingAndGlyphs">M</text><text x="88.500" y="6.500" class="b" textLength="15" lengthAdjust="spacingAndGlyphs">FX</text><text x="103" y="5.300" class="n" textLength="51" lengthAdjust="spacingAndGlyphs">05-MIDI</text></g>
<g transform="translate(1247,634)"><use href="#l2"/><text x="44.500" y="6.500" class="b" textLength="14" lengthAdjust="spacingAndGlyphs">M</text><text x="66.500" y="6.500" class="b" textLength="15" lengthAdjust="spacingAndGlyphs">FX</text><text x="81" y="5.300" class="n" textLength="51" lengthAdjust="spacingAndGlyphs">05-MIDI</text></g>
<g transform="translate(1475,634)"><use href="#l3"/><text x="44.500" y="6.500" class="b" textLength="14" lengthAdjust="spacingAndGlyphs">M</text><text x="88.500" y="6.500" class="b" textLength="15" lengthAdjust="spacingAndGlyphs">FX</text><text x="103" y="5.300" class="n" textLength="51" lengthAdjust="spacingAndGlyphs">05-MIDI</text></g>
<g transform="translate(1703,634)"><use href="#bxk"/><text x="44.500" y="6.500" class="b" textLength="14" lengthAdjust="spacingAndGlyphs">M</text></g>

<g transform="translate(677,734)"><use href="#l2"/><text x="44.500" y="6.500" class="b" textLength="14" lengthAdjust="spacingAndGlyphs">M</text><text x="66.500" y="6.500" class="b" textLength="15" lengthAdjust="spacingAndGlyphs">FX</text><text x="81" y="5.300" class="n" textLength="32" lengthAdjust="spacingAndGlyphs">06-...</text></g>
<g transform="translate(791,734)"><use href="#l3"/><text x="44.500" y="6.500" class="b" textLength="14" lengthAdjust="spacingAndGlyphs">M</text><text x="88.500" y="6.500" class="b" textLength="15" lengthAdjust="spacingAndGlyphs">FX</text><text x="103" y="5.300" class="n" textLength="51" lengthAdjust="spacingAndGlyphs">06-MIDI</text></g>
<g transform="translate(1247,734)"><use href="#l2"/><text x="44.500" y="6.500" class="b" textLength="14" lengthAdjust="spacingAndGlyphs">M</text><text x="66.500" y="6.500" class="b" textLength="15" lengthAdjust="spacingAndGlyphs">FX</text><text x="81" y="5.300" class="n" textLength="51" lengthAdjust="spacingAndGlyphs">06-MIDI</text></g>
<g transform="translate(1475,734)"><use href="#l3"/><text x="44.500" y="6.500" class="b" textLength="14" lengthAdjust="spacingAndGlyphs">M</text><text x="88.500" y="6.500" class="b" textLength="15" lengthAdjust="spacingAndGlyphs">FX</text><text x="103" y="5.300" class="n" textLength="51" lengthAdjust="spacingAndGlyphs">06-MIDI</text></g>
<g transform="translate(1703,734)"><use href="#bxk"/><text x="44.500" y="6.500" class="b" textLength="14" lengthAdjust="spacingAndGlyphs">M</text></g>

<g transform="translate(1019,834)"><use href="#l3"/><text x="44.500" y="6.500" class="b" textLength="14" lengthAdjust="spacingAndGlyphs">M</text><text x="88.500" y="6.500" class="b" textLength="15" lengthAdjust="spacingAndGlyphs">FX</text><text x="103" y="5.300" class="n" textLength="51" lengthAdjust="spacingAndGlyphs">07-MIDI</text></g>
<g transform="translate(1247,834)"><use href="#l2"/><text x="44.500" y="6.500" class="b" textLength="14" lengthAdjust="spacingAndGlyphs">M</text><text x="66.500" y="6.500" class="b" textLength="15" lengthAdjust="spacingAndGlyphs">FX</text><text x="81" y="5.300" class="n" textLength="51" lengthAdjust="spacingAndGlyphs">07-MIDI</text></g>
<g transform="translate(1475,834)"><use href="#l3"/><text x="44.500" y="6.500" class="b" textLength="14" lengthAdjust="spacingAndGlyphs">M</text><text x="88.500" y="6.500" class="b" textLength="15" lengthAdjust="spacingAndGlyphs">FX</text><text x="103" y="5.300" class="n" textLength="51" lengthAdjust="spacingAndGlyphs">07-MIDI</text></g>

<g transform="translate(677,894)"><use href="#l2"/><text x="44.500" y="6.500" class="b" textLength="14" lengthAdjust="spacingAndGlyphs">M</text><text x="66.500" y="6.500" class="b" textLength="15" lengthAdjust="spacingAndGlyphs">FX</text><text x="81" y="5.300" class="n" textLength="32" lengthAdjust="spacingAndGlyphs">08-...</text></g>
<g transform="translate(1247,894)"><use href="#l2"/><text x="44.500" y="6.500" class="b" textLength="14" lengthAdjust="spacingAndGlyphs">M</text><text x="66.500" y="6.500" class="b" textLength="15" lengthAdjust="spacingAndGlyphs">FX</text><text x="81" y="5.300" class="n" textLength="51" lengthAdjust="spacingAndGlyphs">08-MIDI</text></g>

<!-- scrollbars -->
<rect x="1892" y="296" width="16" height="609" rx="8" fill="#454545"/>
<rect x="1895" y="622" width="10" height="2" fill="#222"/>
<circle cx="1899.700" cy="286" r="8.500" fill="#111"/><path d="M1895 290H1904L1899.500 282Z" fill="#aaa"/>
<circle cx="1899.700" cy="927" r="8.500" fill="#111"/><path d="M1895 923H1904L1899.500 931Z" fill="#aaa"/>
<path d="M1899.500 947V958M1894 952.500H1905" stroke="#a9a9a9" stroke-width="3.500"/>
<path d="M1894 969H1905" stroke="#444" stroke-width="2"/>
<path d="M1894 985H1905" stroke="#a9a9a9" stroke-width="3.500"/>
<rect x="710" y="1003" width="776" height="15" rx="7.500" fill="#5a5a5a"/>
<circle cx="716" cy="1010.500" r="3.800" fill="#222"/><circle cx="1478" cy="1010.500" r="3.800" fill="#222"/>
<rect x="1095" y="1005" width="2.500" height="11" fill="#222"/>
<circle cx="689" cy="1010.500" r="8.500" fill="#111"/><path d="M693 1006V1015L685 1010.500Z" fill="#aaa"/>
<circle cx="1815.700" cy="1010.500" r="8.500" fill="#111"/><path d="M1812 1006V1015L1820 1010.500Z" fill="#aaa"/>
<path d="M1841.500 1004V1017M1835 1010.500H1848" stroke="#a9a9a9" stroke-width="3.500"/>
<path d="M1857.500 1004V1017" stroke="#444"/>
<path d="M1867 1010.500H1881" stroke="#a9a9a9" stroke-width="3.500"/>

<!-- bottom right -->
<rect x="1358" y="1029" width="135" height="52" rx="10" fill="#262626"/>
<text x="1426" y="1061" font-size="21" fill="#cfcfcf" class="c">A 1/2</text>
<rect x="1506" y="1026" width="59.500" height="55" rx="9" fill="#262626"/>
<text x="1536" y="1061" font-size="21" fill="#8b9a9a" class="c">4/4</text>
<rect x="1572" y="1026" width="89.500" height="55" rx="9" fill="#262626"/>
<ellipse cx="1606" cy="1047" rx="4" ry="3.500" fill="#8f9a9a"/><path d="M1609.500 1047V1032" stroke="#8f9a9a" stroke-width="1.300"/>
<path d="M1618 1039H1631M1618 1044H1631" stroke="#8f9a9a" stroke-width="1.500"/>
<text x="1617" y="1069" font-size="15" fill="#8f9a9a" class="c">44</text>
<rect x="1668.500" y="1026" width="86" height="55" rx="9" fill="#262626"/>
<path d="M1683 1042L1689 1035L1695 1042" fill="none" stroke="#bbb" stroke-width="2.500"/><circle cx="1682" cy="1042" r="2.600" fill="#bbb"/><circle cx="1689" cy="1035" r="2.600" fill="#bbb"/><circle cx="1696" cy="1042" r="2.600" fill="#bbb"/>
<text x="1700.700" y="1046" font-size="16" fill="#a9b0b0" textLength="41.500" lengthAdjust="spacingAndGlyphs">GLOBAL</text>
<rect x="1675" y="1052" width="72" height="21" rx="10.500" fill="#333"/>
<text x="1683" y="1068" font-size="16" fill="#b5baba" textLength="19" lengthAdjust="spacingAndGlyphs">OFF</text>
<circle cx="1736.700" cy="1062.500" r="9.500" fill="#7d8a88"/><path d="M1731 1058H1742.500L1736.700 1067Z" fill="#2c2c2c"/>
<ellipse cx="1789" cy="1052.500" rx="24" ry="24.500" fill="#262626"/>
<path d="M1789.500 1030V1050" stroke="#d0d0d0" stroke-width="1"/>
<text x="1845" y="1045" font-size="15" fill="#8b9292" textLength="36" lengthAdjust="spacingAndGlyphs">Rate:</text>
<text x="1852.500" y="1070" font-size="15" fill="#8b9292" textLength="21.500" lengthAdjust="spacingAndGlyphs">1.0</text>
</svg>
</body></html>
